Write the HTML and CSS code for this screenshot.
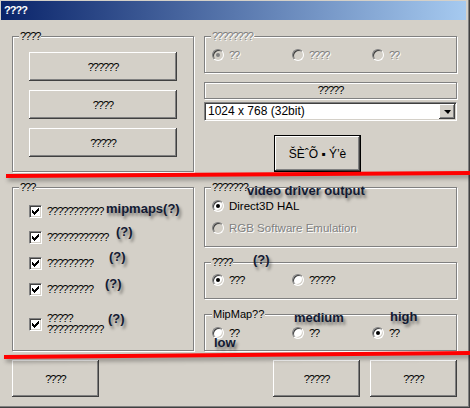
FILE: index.html
```html
<!DOCTYPE html>
<html lang="en">
<head>
    <meta charset="UTF-8">
    <title>????</title>
    <link rel="stylesheet" href="styles.css">
</head>
<body>
<div class="window">
    <div class="titlebar"><span class="q">????</span></div>

    <div class="client">
        <!-- top: menu + display mode -->
        <div class="row row-top">
            <fieldset class="group menu-group">
                <legend class="q">????</legend>
                <div class="menu-buttons">
                    <button class="btn q">??????</button>
                    <button class="btn q">????</button>
                    <button class="btn q">?????</button>
                </div>
            </fieldset>

            <div class="col">
                <fieldset class="group mode-group disabled">
                    <legend class="q">????????</legend>
                    <div class="radio-row pad-7">
                        <div class="opt"><span class="radio on"></span><span class="q">??</span></div>
                        <div class="opt"><span class="radio"></span><span class="q">????</span></div>
                        <div class="opt"><span class="radio"></span><span class="q">??</span></div>
                    </div>
                </fieldset>
                <div class="panel-head q">?????</div>
                <div class="combo">
                    <span class="combo-text">1024 x 768 (32bit)</span>
                    <span class="combo-drop"><span class="arrow"></span></span>
                </div>
                <button class="btn btn-default apply">ŠÈˆÕ ▪ Ý’è</button>
            </div>
        </div>

        <!-- middle: options + driver -->
        <div class="row row-mid">
            <fieldset class="group options-group">
                <legend class="q">???</legend>
                <div class="checks">
                    <div class="check-row"><span class="check"><svg viewBox="0 0 7 7" width="7" height="7"><path d="M0 2H1V3H2V4H3V3H4V2H5V1H6V0H7V3H6V4H5V5H4V6H3V7H2V6H1V5H0Z"/></svg></span><span class="q">???????????</span></div>
                    <div class="check-row"><span class="check"><svg viewBox="0 0 7 7" width="7" height="7"><path d="M0 2H1V3H2V4H3V3H4V2H5V1H6V0H7V3H6V4H5V5H4V6H3V7H2V6H1V5H0Z"/></svg></span><span class="q">????????????</span></div>
                    <div class="check-row"><span class="check"><svg viewBox="0 0 7 7" width="7" height="7"><path d="M0 2H1V3H2V4H3V3H4V2H5V1H6V0H7V3H6V4H5V5H4V6H3V7H2V6H1V5H0Z"/></svg></span><span class="q">?????????</span></div>
                    <div class="check-row"><span class="check"><svg viewBox="0 0 7 7" width="7" height="7"><path d="M0 2H1V3H2V4H3V3H4V2H5V1H6V0H7V3H6V4H5V5H4V6H3V7H2V6H1V5H0Z"/></svg></span><span class="q">?????????</span></div>
                    <div class="check-row tall"><span class="check"><svg viewBox="0 0 7 7" width="7" height="7"><path d="M0 2H1V3H2V4H3V3H4V2H5V1H6V0H7V3H6V4H5V5H4V6H3V7H2V6H1V5H0Z"/></svg></span><span class="q two-line">?????<br>???????????</span></div>
                </div>
            </fieldset>

            <div class="col">
                <fieldset class="group driver-group">
                    <legend class="q">???????</legend>
                    <div class="radio-col">
                        <div class="opt"><span class="radio on"></span><span class="opt-text">Direct3D HAL</span></div>
                        <div class="opt disabled"><span class="radio"></span><span class="opt-text">RGB Software Emulation</span></div>
                    </div>
                </fieldset>
                <fieldset class="group small-group">
                    <legend class="q">????</legend>
                    <div class="radio-row pad-6">
                        <div class="opt"><span class="radio on"></span><span class="q">???</span></div>
                        <div class="opt"><span class="radio"></span><span class="q">?????</span></div>
                    </div>
                </fieldset>
                <fieldset class="group small-group">
                    <legend class="legend-mip">MipMap??</legend>
                    <div class="radio-row pad-7">
                        <div class="opt"><span class="radio"></span><span class="q">??</span></div>
                        <div class="opt"><span class="radio"></span><span class="q">??</span></div>
                        <div class="opt"><span class="radio on"></span><span class="q">??</span></div>
                    </div>
                </fieldset>
            </div>
        </div>

        <!-- bottom buttons -->
        <div class="row row-bottom">
            <button class="btn btn-wide q">????</button>
            <div class="spacer"></div>
            <button class="btn btn-wide q">?????</button>
            <button class="btn btn-wide q">????</button>
        </div>
    </div>

    <!-- annotations drawn over the dialog -->
    <svg class="marks" width="470" height="408" viewBox="0 0 470 408">
        <line x1="6" y1="176" x2="470" y2="173" />
        <line x1="4" y1="357" x2="470" y2="353" />
    </svg>
    <span class="note note-mipmaps">mipmaps(?)</span>
    <span class="note note-q2">(?)</span>
    <span class="note note-q3">(?)</span>
    <span class="note note-q4">(?)</span>
    <span class="note note-q5">(?)</span>
    <span class="note note-driver">video driver output</span>
    <span class="note note-q6">(?)</span>
    <span class="note note-medium">medium</span>
    <span class="note note-high">high</span>
    <span class="note note-low">low</span>
</div>
</body>
</html>
```

FILE: styles.css
```css
body {
    margin: 0;
    font-family: "Liberation Sans", Arial, sans-serif;
    font-size: 11px;
    color: #000;
}
.window {
    position: relative;
    width: 470px;
    height: 408px;
    box-sizing: border-box;
    padding: 1px 4px 3px 1px;
    background: #d4d0c8;
    box-shadow: inset -1px -1px 0 #404040, inset -2px -2px 0 #808080;
    overflow: hidden;
}
.titlebar {
    height: 19px;
    padding-left: 3px;
    background: linear-gradient(to right, #0a246a, #a6caf0);
    color: #fff;
    font-weight: bold;
    font-size: 11px;
    line-height: 19px;
}
.q {
    letter-spacing: -1px;
}
.client {
    padding: 10px 9px 0 11px;
}
.row {
    display: flex;
    gap: 10px;
}
.row-mid,
.row-bottom {
    margin-top: 9px;
}
.col {
    width: 253px;
    display: flex;
    flex-direction: column;
}

/* group boxes */
.group {
    margin: 0;
    padding: 0;
    min-width: 0;
    box-sizing: border-box;
    border: 1px solid #808080;
    box-shadow: inset 1px 1px 0 #fff, 1px 1px 0 #fff;
}
.group legend {
    margin-left: 6px;
    padding: 0 1px;
    font-size: 11px;
    line-height: 12px;
    background: #d4d0c8;
}
.group .legend-mip {
    margin-left: 7px;
}
.menu-group,
.options-group {
    width: 182px;
}
.menu-group {
    height: 142px;
}
.options-group {
    height: 170px;
}
.mode-group {
    height: 43px;
}
.driver-group {
    height: 66px;
}
.small-group {
    height: 43px;
    margin-top: 9px;
}

/* buttons */
.btn {
    box-sizing: border-box;
    margin: 0;
    padding: 0;
    border: 0;
    background: #d4d0c8;
    box-shadow: inset -1px -1px 0 #404040, inset 1px 1px 0 #fff, inset -2px -2px 0 #808080;
    font-family: "Liberation Sans", Arial, sans-serif;
    font-size: 11px;
    color: #000;
}
.btn-default {
    border: 1px solid #000;
}
.menu-buttons {
    display: flex;
    flex-direction: column;
    gap: 9px;
    padding: 10px 16px 0;
}
.menu-buttons .btn {
    height: 29px;
}
.apply {
    width: 87px;
    height: 37px;
    margin: 14px 0 0 70px;
    font-size: 12px;
}
.btn-wide {
    width: 87px;
    height: 37px;
}
.spacer {
    flex: 1;
}

/* header strip + combo */
.panel-head {
    margin-top: 9px;
    height: 17px;
    box-sizing: border-box;
    border: 1px solid #808080;
    box-shadow: inset 1px 1px 0 #fff, 1px 1px 0 #fff;
    text-align: center;
    line-height: 15px;
}
.combo {
    margin-top: 3px;
    height: 19px;
    box-sizing: border-box;
    display: flex;
    align-items: center;
    border: 1px solid;
    border-color: #808080 #fff #fff #808080;
    box-shadow: inset 1px 1px 0 #404040, inset -1px -1px 0 #d4d0c8;
    background: #fff;
    padding: 1px;
}
.combo-text {
    flex: 1;
    padding-left: 2px;
    font-size: 12px;
    line-height: 15px;
}
.combo-drop {
    width: 16px;
    height: 15px;
    box-sizing: border-box;
    display: flex;
    align-items: center;
    justify-content: center;
    background: #d4d0c8;
    box-shadow: inset -1px -1px 0 #404040, inset 1px 1px 0 #fff, inset -2px -2px 0 #808080;
}
.arrow {
    width: 0;
    height: 0;
    border-top: 4px solid #000;
    border-left: 4px solid transparent;
    border-right: 3px solid transparent;
}

/* radios */
.radio-row {
    display: flex;
    padding-left: 7px;
}
.pad-7 {
    padding-top: 7px;
}
.pad-6 {
    padding-top: 6px;
}
.radio-row .opt {
    width: 80px;
}
.radio-col {
    display: flex;
    flex-direction: column;
    gap: 10px;
    padding: 7px 7px 0;
}
.opt {
    display: flex;
    align-items: center;
    gap: 5px;
    height: 12px;
    line-height: 12px;
}
.opt-text {
    font-size: 11.5px;
}
.radio {
    width: 12px;
    height: 12px;
    flex: none;
    box-sizing: border-box;
    border-radius: 50%;
    border: 1px solid;
    border-color: #808080 #fff #fff #808080;
    box-shadow: inset 1px 1px 0 #404040, inset -1px -1px 0 #d4d0c8;
    background: #fff;
    display: grid;
    place-items: center;
}
.radio.on::after {
    content: "";
    width: 4px;
    height: 4px;
    border-radius: 50%;
    background: #000;
}
.disabled .radio {
    background: #d4d0c8;
}
.disabled .radio.on::after {
    background: #808080;
}
.disabled .q,
.disabled .opt-text,
.opt.disabled {
    color: #808080;
    text-shadow: 1px 1px 0 #fff;
}

/* checkboxes */
.checks {
    padding: 5px 16px 0;
}
.check-row {
    display: flex;
    align-items: center;
    gap: 5px;
    height: 26px;
}
.check-row.tall {
    height: 44px;
}
.check {
    width: 13px;
    height: 13px;
    flex: none;
    box-sizing: border-box;
    border: 1px solid;
    border-color: #808080 #fff #fff #808080;
    box-shadow: inset 1px 1px 0 #404040, inset -1px -1px 0 #d4d0c8;
    background: #fff;
    display: grid;
    place-items: center;
}
.check svg {
    display: block;
    shape-rendering: crispEdges;
}
.two-line {
    line-height: 11px;
}

/* hand-drawn notes on top */
.marks {
    position: absolute;
    left: 0;
    top: 0;
    filter: drop-shadow(2px 3px 2px rgba(0, 0, 0, 0.35));
}
.marks line {
    stroke: #f00;
    stroke-width: 4;
}
.note {
    position: absolute;
    font-weight: bold;
    font-size: 13px;
    line-height: 14px;
    color: #121a33;
    white-space: nowrap;
    text-shadow: 2px 3px 3px rgba(0, 0, 0, 0.45);
}
.note-mipmaps { left: 106px; top: 202px; }
.note-q2 { left: 116px; top: 225px; }
.note-q3 { left: 109px; top: 250px; }
.note-q4 { left: 105px; top: 277px; }
.note-q5 { left: 108px; top: 312px; }
.note-driver { left: 247px; top: 184px; }
.note-q6 { left: 253px; top: 253px; }
.note-medium { left: 294px; top: 311px; }
.note-high { left: 390px; top: 310px; }
.note-low { left: 214px; top: 336px; }
```
